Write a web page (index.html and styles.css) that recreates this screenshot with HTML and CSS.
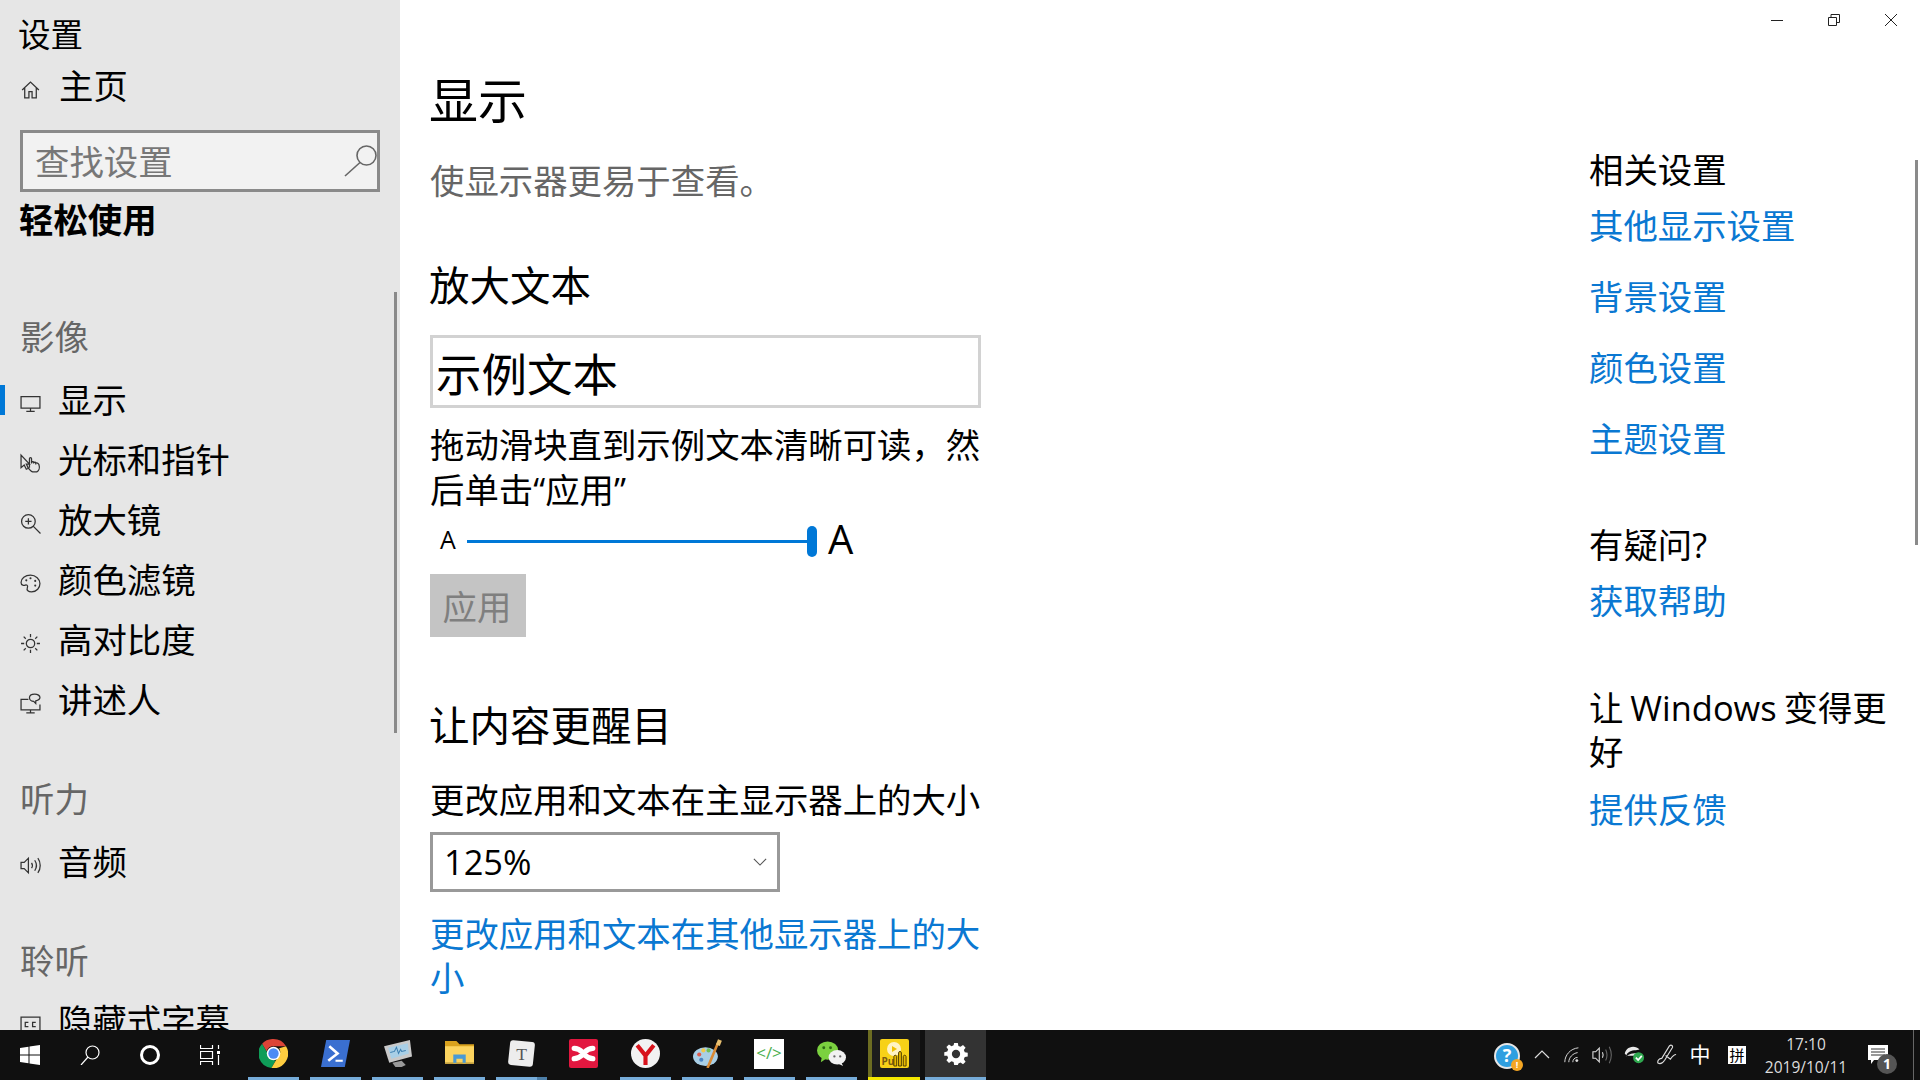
FILE: index.html
```html
<!DOCTYPE html>
<html lang="zh">
<head>
    <meta charset="UTF-8">
    <meta name="viewport" content="width=device-width, initial-scale=1.0">
    <title>设置</title>
    <link rel="stylesheet" href="styles.css">
</head>
<body>
    <div class="window">
        <!-- 左侧导航 -->
        <div class="sidebar">
            <div class="app-title">设置</div>
            <div class="nav-item home">
                <svg class="nav-icon" viewBox="0 0 20 20"><path d="M2 10.5 10 3l8 7.5M4.5 8.5V18h4v-6h3v6h4V8.5"/></svg>
                <span>主页</span>
            </div>
            <div class="search-box">
                <span>查找设置</span>
                <svg class="search-icon" viewBox="0 0 34 34"><circle cx="23.5" cy="11.5" r="9.5"/><path d="M17 18.500 2 32"/></svg>
            </div>
            <div class="group-title">轻松使用</div>

            <div class="section-title first">影像</div>
            <div class="nav-item active">
                <svg class="nav-icon" viewBox="0 0 20 20"><path d="M1 3.5h18v11H1zM10 14.500v3M6 17.5h8"/></svg>
                <span>显示</span>
            </div>
            <div class="nav-item">
                <svg class="nav-icon" viewBox="0 0 20 20"><path d="M1 2v12l3-2.500 2 4 2-1-2-4h3L1 2zM9 14V5.500c0-1.500 2-1.500 2 0V10M11 9c0-1 2-1 2 0v1M13 9.500c0-1 2-1 2 0V11M15 10c0-1 2-1 3 1 1 3 0 6-2 7h-4c-2-.5-3-2-5-5"/></svg>
                <span>光标和指针</span>
            </div>
            <div class="nav-item">
                <svg class="nav-icon" viewBox="0 0 20 20"><circle cx="8" cy="8" r="6.5"/><path d="M8 5v6M5 8h6M12.5 12.5 19.5 19.5"/></svg>
                <span>放大镜</span>
            </div>
            <div class="nav-item">
                <svg class="nav-icon" viewBox="0 0 20 20"><path d="M10 2C5 2 1 5 1 9c0 3 3 3 4 2.500s3 0 2 2.500c-1 2.500 1 4 4 4 5 0 8-4 8-8s-4-8-9-8z"/><circle cx="6" cy="7" r="1"/><circle cx="10" cy="5" r="1"/><circle cx="14.5" cy="7.5" r="1"/><circle cx="14.5" cy="12" r="1"/></svg>
                <span>颜色滤镜</span>
            </div>
            <div class="nav-item">
                <svg class="nav-icon" viewBox="0 0 20 20"><circle cx="10" cy="10" r="4"/><path d="M10 1v3M10 16v3M1 10h3M16 10h3M3.5 3.500l2 2M14.500 14.500l2 2M3.500 16.500l2-2M14.500 5.500l2-2"/></svg>
                <span>高对比度</span>
            </div>
            <div class="nav-item">
                <svg class="nav-icon" viewBox="0 0 20 20"><path d="M8 6H1v10h18v-5M10 16v3M6 19h8M14 1c-3 0-5 1.500-5 3.500S11 8 13 8l2 2 0-2.500c2-.5 4-1.500 4-3.200S17 1 14 1z"/></svg>
                <span>讲述人</span>
            </div>

            <div class="section-title hearing">听力</div>
            <div class="nav-item">
                <svg class="nav-icon" viewBox="0 0 20 20"><path d="M1 7h3l4-4v14l-4-4H1zM11 7.500c1 1.500 1 3.500 0 5M14 5c2 3 2 7 0 10M17 3c3 4 3 10 0 14"/></svg>
                <span>音频</span>
            </div>
            <div class="section-title listen">聆听</div>
            <div class="nav-item caption">
                <svg class="nav-icon" viewBox="0 0 20 20"><path d="M1 3h18v14H1z"/><path d="M8 8H5v4h3M15 8h-3v4h3"/></svg>
                <span>隐藏式字幕</span>
            </div>
            <div class="side-scroll"></div>
        </div>

        <!-- 显示设置 -->
        <div class="content">
            <h1>显示</h1>
            <p class="subtitle">使显示器更易于查看。</p>

            <h2 class="enlarge">放大文本</h2>
            <div class="sample-box">示例文本</div>
            <p class="desc">拖动滑块直到示例文本清晰可读，然后单击“应用”</p>
            <div class="slider-row">
                <span class="small-a">A</span>
                <div class="slider-track"><div class="slider-thumb"></div></div>
                <span class="big-a">A</span>
            </div>
            <button class="apply-btn">应用</button>

            <h2 class="prominent">让内容更醒目</h2>
            <div class="select-label">更改应用和文本在主显示器上的大小</div>
            <div class="select-box">
                <span>125%</span>
                <svg class="chevron" viewBox="0 0 16 9"><path d="M1 1l7 7 7-7"/></svg>
            </div>
            <a class="other-link">更改应用和文本在其他显示器上的大小</a>
        </div>

        <!-- 右侧相关设置 -->
        <div class="aside">
            <div class="aside-title first">相关设置</div>
            <a class="aside-link">其他显示设置</a>
            <a class="aside-link next">背景设置</a>
            <a class="aside-link next">颜色设置</a>
            <a class="aside-link next">主题设置</a>
            <div class="aside-title">有疑问?</div>
            <a class="aside-link">获取帮助</a>
            <div class="aside-title better">让 Windows 变得更好</div>
            <a class="aside-link feedback">提供反馈</a>
            <div class="main-scroll"></div>
        </div>

        <div class="win-controls">
            <svg viewBox="0 0 12 12"><path d="M0 6.5h12"/></svg>
            <svg viewBox="0 0 12 12"><path d="M.5 3.500h8v8h-8zM3 3.500V.5h8.500v8h-3"/></svg>
            <svg viewBox="0 0 12 12"><path d="M0 0l12 12M12 0 0 12"/></svg>
        </div>
    </div>

    <!-- 任务栏 -->
    <div class="taskbar">
        <div class="tb-btn">
            <svg class="sys-icon" viewBox="0 0 20 20"><path class="fill" d="M0 3l8.500-1.200v7.700H0zM9.500 1.600 20 0v9.500H9.500zM0 10.500h8.500v7.700L0 17zM9.500 10.500H20V20L9.500 18.400z"/></svg>
        </div>
        <div class="tb-btn">
            <svg class="sys-icon" viewBox="0 0 20 20"><circle cx="12.5" cy="7.5" r="6.5"/><path d="M8 12 1 20"/></svg>
        </div>
        <div class="tb-btn">
            <svg class="sys-icon thick" viewBox="0 0 20 20"><circle cx="10" cy="10" r="8.5"/></svg>
        </div>
        <div class="tb-btn">
            <svg class="sys-icon" viewBox="0 0 20 20"><path d="M.5 0v3.500h12V0M.5 6.500h12v7H.5zM.5 20v-3.500h12V20M18.500 0v4M18.500 10v10"/><rect class="fill" x="17" y="6" width="3" height="3"/></svg>
        </div>

        <div class="pins">
            <div class="pin running">
                <svg viewBox="0 0 28 28">
                    <path fill="#db4437" d="M14 0a14 14 0 0 1 12.100 7H14a7 7 0 0 0-6.700 5L3 4.700A14 14 0 0 1 14 0z"/>
                    <path fill="#0f9d58" d="M3 4.700 9.100 15a7 7 0 0 0 7 5.700L12 28A14 14 0 0 1 3 4.700z"/>
                    <path fill="#ffcd40" d="M26.100 7A14 14 0 0 1 12 28l6.100-10.500A7 7 0 0 0 19.500 9z"/>
                    <circle cx="14" cy="14" r="6.500" fill="#fff"/>
                    <circle cx="14" cy="14" r="5" fill="#4c8bf5"/>
                </svg>
            </div>
            <div class="pin running">
                <svg viewBox="0 0 28 28">
                    <path fill="#3a6fd0" d="M5 1h23l-5 26H0z"/>
                    <path fill="none" stroke="#fff" stroke-width="2.500" d="M8 7l8 7-9 7"/>
                    <path stroke="#fff" stroke-width="2" d="M14 21h7"/>
                </svg>
            </div>
            <div class="pin running">
                <svg viewBox="0 0 28 28">
                    <path fill="#c9c9c9" d="M1 7 26 1l2 16-22 6z"/>
                    <path fill="#a9cfe6" d="M5 8.500 24 4l1 10-17 5z"/>
                    <path fill="none" stroke="#3d7fb0" d="M7 13l4-1 2-4 2 6 2-4 1 2 4-1"/>
                    <path fill="#999" d="M9 23l9-2 4 4-4 2H12z"/>
                </svg>
            </div>
            <div class="pin running">
                <svg viewBox="0 0 28 28">
                    <path fill="#d9a21e" d="M0 2h11l3 3h14v5H0z"/>
                    <path fill="#fcd45f" d="M0 7h28v16H0z"/>
                    <path fill="#4a9ad4" d="M8 15h12v9h-3v-5h-6v5H8z"/>
                    <path fill="#e6ba45" d="M0 23h28v1H0z"/>
                </svg>
            </div>
            <div class="pin running notched">
                <svg viewBox="0 0 28 28">
                    <rect x="2" y="2" width="24" height="24" rx="3" fill="#ededed" transform="rotate(6 14 14)"/>
                    <text x="14" y="20" class="pin-t">T</text>
                </svg>
            </div>
            <div class="pin">
                <svg viewBox="0 0 28 28">
                    <rect width="28" height="28" rx="2" fill="#e2173f"/>
                    <path fill="none" stroke="#fff" stroke-width="5" stroke-linecap="round" d="M5 9c5 0 7 3 9 5s4 5 9 5M5 19c5 0 7-3 9-5s4-5 9-5"/>
                </svg>
            </div>
            <div class="pin running">
                <svg viewBox="0 0 28 28">
                    <circle cx="14" cy="14" r="14" fill="#f2f2f2"/>
                    <path fill="none" stroke="#d8131c" stroke-width="4" d="M6 6l8 10 8-10M14 15v10"/>
                </svg>
            </div>
            <div class="pin running">
                <svg viewBox="0 0 28 28">
                    <ellipse cx="12" cy="17" rx="12" ry="9" fill="#a9cfe6"/>
                    <circle cx="6" cy="15" r="2" fill="#e05a4c"/>
                    <circle cx="10" cy="11" r="2" fill="#f2c94c"/>
                    <circle cx="15" cy="11" r="2" fill="#6fbf5a"/>
                    <circle cx="8" cy="20" r="2" fill="#4a84c4"/>
                    <path stroke="#d98a35" stroke-width="2.500" d="M14 28 24 4"/>
                    <path stroke="#e8c070" stroke-width="4" d="M24 6l2-5"/>
                </svg>
            </div>
            <div class="pin running">
                <div class="code-tile">&lt;/&gt;</div>
            </div>
            <div class="pin running">
                <svg viewBox="0 0 30 28">
                    <ellipse cx="11" cy="11" rx="11" ry="9.500" fill="#7bd13f"/>
                    <path fill="#7bd13f" d="M5 17l-1 6 6-4z"/>
                    <ellipse cx="21" cy="18" rx="9" ry="7.500" fill="#f1f1f1"/>
                    <path fill="#f1f1f1" d="M25 23l2 4-6-3z"/>
                    <circle cx="7" cy="8" r="1.500" fill="#2c6b15"/>
                    <circle cx="14" cy="8" r="1.500" fill="#2c6b15"/>
                    <circle cx="18" cy="17" r="1.200" fill="#666"/>
                    <circle cx="24" cy="17" r="1.200" fill="#666"/>
                </svg>
            </div>
            <div class="pin open-app">
                <div class="pu-tile">
                    <svg class="pu-circle" viewBox="0 0 14 14"><circle cx="7" cy="7" r="7" fill="#fff3c4"/><path fill="#f0c000" d="M5 4l5 3-5 3z"/></svg>
                    <span>Pu</span>
                    <svg class="pu-bars" viewBox="0 0 16 18"><path d="M2 17V7c0-2 3-2 3 0v10zM7 17V3c0-2 3-2 3 0v14zM12 17V7c0-2 3-2 3 0v10z"/></svg>
                </div>
            </div>
            <div class="pin active-app">
                <svg viewBox="-1 -1 26 26"><path fill="#fff" fill-rule="evenodd" d="M10 0h4l.6 3.200 2.300 1 2.700-1.900 2.800 2.800-1.900 2.700 1 2.300 3.200.6v4l-3.200.6-1 2.300 1.900 2.700-2.800 2.800-2.700-1.900-2.300 1L14 24h-4l-.6-3.200-2.300-1-2.700 1.900-2.800-2.800 1.900-2.700-1-2.300L-.7 14v-4l3.200-.6 1-2.300-1.900-2.700 2.800-2.800 2.700 1.900 2.300-1zM12 7.500a4.500 4.500 0 1 0 0 9 4.500 4.500 0 0 0 0-9z"/></svg>
            </div>
        </div>

        <div class="tray">
            <div class="help-icon">?<span class="help-badge">!</span></div>
            <svg class="tray-svg chevron-up" viewBox="0 0 16 9"><path d="M1 8l7-7 7 7"/></svg>
            <svg class="tray-svg wifi" viewBox="0 0 20 20"><path d="M1 19C1 10 8 2 18 1M6 19c0-6 5-11 11-12M11 19c0-3 2-6 6-6"/><circle cx="16" cy="17" r="1.800" class="fill"/></svg>
            <svg class="tray-svg speaker" viewBox="0 0 22 20"><path d="M1 6.500h3l4-4v15l-4-4H1zM11.500 7c1 2 1 4 0 6"/><path class="dim" d="M15 4c2 4 2 8 0 12M19 1c3 6 3 12 0 18"/></svg>
            <svg class="tray-svg cloud" viewBox="0 0 24 20">
                <path fill="#e8e8e8" d="M2 10c0-4 4-8 9-8 3 0 5 1 7 3l-4 1C9 6 5 8 4 11zM3 13c3-3 8-4 14-4v3H4z"/>
                <circle cx="17" cy="14" r="6" fill="#2fa84f"/>
                <path fill="none" stroke="#fff" stroke-width="1.800" d="M14 14l2.500 2.500L20.500 12"/>
            </svg>
            <svg class="tray-svg pen" viewBox="0 0 22 22"><path d="M1 20c-1-3 2-5 4-5l8-13c2-2 4 0 3 2L8 17c-2 3-5 4-7 3zM9 12l5 4c2-3 4-5 6-5"/></svg>
            <span class="ime">中</span>
            <span class="ime-pin">拼</span>
            <div class="clock">
                <span>17:10</span>
                <span>2019/10/11</span>
            </div>
            <div class="notify">
                <svg viewBox="0 0 20 20"><path fill="#fff" d="M0 0h20v15H6l-3 4v-4H0z"/><path stroke="#333" d="M3 4h14M3 7h14M3 10h14"/></svg>
                <span class="notify-badge">1</span>
            </div>
            <div class="tray-divider"></div>
        </div>
    </div>
</body>
</html>
```
FILE: styles.css
```css
* {
    box-sizing: border-box;
}
body {
    margin: 0;
    height: 1080px;
    overflow: hidden;
    display: flex;
    flex-direction: column;
    font-family: "Open Sans", "Noto Sans CJK SC", sans-serif;
    font-size: 34.4px;
    line-height: 44px;
    color: #000;
    background: #fff;
}
h1, h2, p {
    margin: 0;
    font-weight: 400;
}
a {
    display: block;
    color: #0a78d2;
}

.window {
    position: relative;
    display: flex;
    height: 1030px;
    overflow: hidden;
}

/* 左侧导航 */
.sidebar {
    position: relative;
    flex: none;
    width: 400px;
    padding: 13px 20px 0;
    background: #e6e6e6;
}
.app-title {
    margin-left: -2px;
    font-size: 32.5px;
}
.nav-item {
    position: relative;
    display: flex;
    align-items: center;
    gap: 17px;
    height: 60px;
}
.nav-item.home {
    height: 44px;
    margin-top: 7px;
    gap: 18px;
}
.nav-item.active::before {
    content: "";
    position: absolute;
    left: -20px;
    top: 15px;
    width: 5px;
    height: 30px;
    background: #0078d7;
}
.nav-item.caption {
    margin-top: 8px;
}
.nav-icon {
    flex: none;
    width: 21px;
    height: 21px;
    margin-top: 6px;
    fill: none;
    stroke: #333;
    stroke-width: 1.2;
}
.nav-icon circle[r="1"] {
    fill: #333;
    stroke: none;
}
.search-box {
    display: flex;
    align-items: center;
    justify-content: space-between;
    width: 360px;
    height: 62px;
    margin-top: 22px;
    padding: 2px 0 0 12px;
    background: #f2f2f2;
    border: 3px solid #8a8a8a;
    color: #777;
}
.search-icon {
    width: 34px;
    height: 34px;
    margin-top: -2px;
    fill: none;
    stroke: #666;
    stroke-width: 1.6;
}
.group-title {
    margin-top: 6px;
    margin-left: -1px;
    font-weight: 700;
}
.section-title {
    color: #666;
}
.section-title.first {
    margin-top: 73px;
    margin-bottom: 11px;
}
.section-title.hearing {
    margin-top: 47px;
    margin-bottom: 11px;
}
.section-title.listen {
    margin-top: 47px;
}
.side-scroll {
    position: absolute;
    right: 3px;
    top: 292px;
    width: 3px;
    height: 441px;
    background: #8a8a8a;
}

/* 显示设置 */
.content {
    flex: 1;
    padding: 68px 0 0 30px;
}
.content > * {
    width: 551px;
}
h1 {
    margin-left: -1px;
    font-size: 49px;
    line-height: 64px;
}
.subtitle {
    margin-top: 27px;
    color: #666;
}
h2 {
    margin-left: -1px;
    font-size: 40.5px;
    line-height: 54px;
}
h2.enlarge {
    margin-top: 56px;
}
h2.prominent {
    margin-top: 62px;
}
.sample-box {
    height: 73px;
    margin-top: 22px;
    padding-left: 3px;
    border: 3px solid #d2d2d2;
    font-size: 45.5px;
    line-height: 73px;
}
.desc {
    margin-top: 14px;
    line-height: 45px;
}
.slider-row {
    display: flex;
    align-items: center;
    height: 40px;
    margin-top: 9px;
    padding-left: 10px;
}
.small-a {
    width: 27px;
    margin-bottom: 4px;
    font-size: 25px;
}
.slider-track {
    position: relative;
    width: 350px;
    height: 3px;
    background: #0078d7;
}
.slider-thumb {
    position: absolute;
    right: 0;
    top: -14px;
    width: 10px;
    height: 31px;
    border-radius: 5px;
    background: #0078d7;
}
.big-a {
    margin-left: 11px;
    margin-bottom: 4px;
    font-size: 40px;
}
.apply-btn {
    display: block;
    width: 96px;
    height: 63px;
    margin-top: 13px;
    padding: 2px 2px 0 0;
    border: none;
    background: #c4c4c4;
    color: #7f7f7f;
    font: inherit;
}
.select-label {
    margin-top: 25px;
}
.select-box {
    display: flex;
    align-items: center;
    justify-content: space-between;
    width: 350px !important;
    height: 60px;
    margin-top: 10px;
    padding: 0 10px 0 11px;
    border: 3px solid #999;
}
.chevron {
    width: 14px;
    height: 8px;
    fill: none;
    stroke: #555;
    stroke-width: 1.3;
}
.other-link {
    margin-top: 20px;
}

/* 右侧相关设置 */
.aside {
    position: relative;
    flex: none;
    width: 331px;
    padding: 148px 20px 0 0;
}
.aside-title {
    margin-top: 62px;
}
.aside-title.first {
    margin-top: 0;
}
.aside-title.better {
    margin-top: 63px;
    word-spacing: -2px;
}
.aside-link {
    margin-top: 12px;
}
.aside-link.next {
    margin-top: 27px;
}
.aside-link.feedback {
    margin-top: 14px;
}
.main-scroll {
    position: absolute;
    right: 2px;
    top: 160px;
    width: 3px;
    height: 385px;
    background: #8a8a8a;
}
.win-controls {
    position: absolute;
    right: 23px;
    top: 14px;
    display: flex;
    gap: 45px;
}
.win-controls svg {
    width: 12px;
    height: 12px;
    fill: none;
    stroke: #222;
    stroke-width: 1;
}

/* 任务栏 */
.taskbar {
    display: flex;
    flex: none;
    height: 50px;
    background: #101010;
    color: #fff;
}
.tb-btn {
    display: flex;
    align-items: center;
    justify-content: center;
    flex: none;
    width: 60px;
}
.sys-icon {
    width: 20px;
    height: 20px;
    fill: none;
    stroke: #fff;
    stroke-width: 1.2;
}
.sys-icon.thick {
    stroke-width: 3;
}
.sys-icon .fill {
    fill: #fff;
    stroke: none;
}
.pins {
    display: flex;
    margin-left: 2px;
}
.pin {
    position: relative;
    display: flex;
    align-items: center;
    justify-content: center;
    width: 62px;
    height: 50px;
    padding-bottom: 3px;
}
.pin > svg {
    width: 29px;
    height: 29px;
}
.pin.running::after {
    content: "";
    position: absolute;
    left: 6px;
    right: 5px;
    bottom: 0;
    height: 3px;
    background: #76acd9;
}
.pin.notched::before {
    content: "";
    position: absolute;
    right: 5px;
    bottom: 0;
    z-index: 1;
    width: 10px;
    height: 3px;
    background: #4d7fa8;
}
.pin-t {
    fill: #555;
    font-family: "Liberation Serif", serif;
    font-size: 17px;
    text-anchor: middle;
}
.code-tile {
    width: 30px;
    height: 30px;
    background: #fff;
    color: #4caf50;
    font-size: 17px;
    line-height: 28px;
    text-align: center;
}
.open-app {
    width: 52px;
    margin-left: 6px;
    background: #1d1d1d;
    border-left: 4px solid #6d6d22;
}
.open-app::after {
    content: "";
    position: absolute;
    left: -4px;
    right: 0;
    bottom: 0;
    height: 3px;
    background: #f5e800;
}
.pu-tile {
    position: relative;
    width: 29px;
    height: 29px;
    margin-left: -4px;
    border-radius: 2px;
    background: #f7d117;
}
.pu-tile span {
    position: absolute;
    left: 2px;
    bottom: 2px;
    color: #7a5a10;
    font-size: 10px;
    font-weight: 700;
    line-height: 10px;
}
.pu-circle {
    position: absolute;
    left: 7px;
    top: 3px;
    width: 14px;
    height: 14px;
}
.pu-bars {
    position: absolute;
    left: 12px;
    top: 11px;
    width: 15px;
    height: 17px;
    fill: #e8b800;
    stroke: #4a3a00;
    stroke-width: 1;
}
.active-app {
    width: 61px;
    margin-left: 5px;
    background: #333;
}
.active-app::after {
    content: "";
    position: absolute;
    left: 0;
    right: 0;
    bottom: 0;
    height: 3px;
    background: #76acd9;
}
.active-app > svg {
    width: 24px;
    height: 24px;
}

.tray {
    position: relative;
    flex: 1;
}
.tray > * {
    position: absolute;
}
.help-icon {
    left: 508px;
    top: 13px;
    width: 26px;
    height: 26px;
    border-radius: 50%;
    background: #2f9fe0;
    border: 2px solid #e6e6e6;
    color: #fff;
    font-size: 18px;
    font-weight: 700;
    line-height: 21px;
    text-align: center;
}
.help-badge {
    position: absolute;
    right: -5px;
    bottom: -4px;
    width: 12px;
    height: 12px;
    border-radius: 50%;
    background: #f5a623;
    font-size: 9px;
    line-height: 12px;
}
.tray-svg {
    fill: none;
    stroke: #ddd;
    stroke-width: 1.2;
}
.tray-svg .fill {
    fill: #ddd;
    stroke: none;
}
.tray-svg .dim {
    stroke: #666;
}
.chevron-up {
    left: 548px;
    top: 20px;
    width: 16px;
    height: 9px;
}
.wifi {
    left: 578px;
    top: 16px;
    width: 16px;
    height: 18px;
}
.speaker {
    left: 606px;
    top: 15px;
    width: 20px;
    height: 20px;
}
.cloud {
    left: 637px;
    top: 14px;
    width: 22px;
    height: 20px;
    stroke: none;
}
.pen {
    left: 671px;
    top: 14px;
    width: 21px;
    height: 21px;
}
.ime {
    left: 702px;
    top: 0;
    width: 24px;
    font-size: 21px;
    line-height: 48px;
    text-align: center;
}
.ime-pin {
    left: 742px;
    top: 16px;
    width: 18px;
    height: 18px;
    background: #fff;
    color: #000;
    font-size: 15px;
    line-height: 18px;
    text-align: center;
}
.clock {
    left: 772px;
    top: 3px;
    display: flex;
    flex-direction: column;
    align-items: center;
    width: 96px;
    color: #ddd;
    font-size: 15.5px;
    line-height: 23px;
}
.notify {
    left: 882px;
    top: 15px;
    width: 30px;
    height: 30px;
}
.notify svg {
    width: 20px;
    height: 20px;
    display: block;
}
.notify-badge {
    position: absolute;
    left: 9px;
    top: 9px;
    width: 20px;
    height: 20px;
    border-radius: 50%;
    background: #555;
    font-size: 14px;
    font-weight: 700;
    line-height: 20px;
    text-align: center;
}
.tray-divider {
    left: 927px;
    top: 0;
    width: 1px;
    height: 50px;
    background: #666;
}
```
